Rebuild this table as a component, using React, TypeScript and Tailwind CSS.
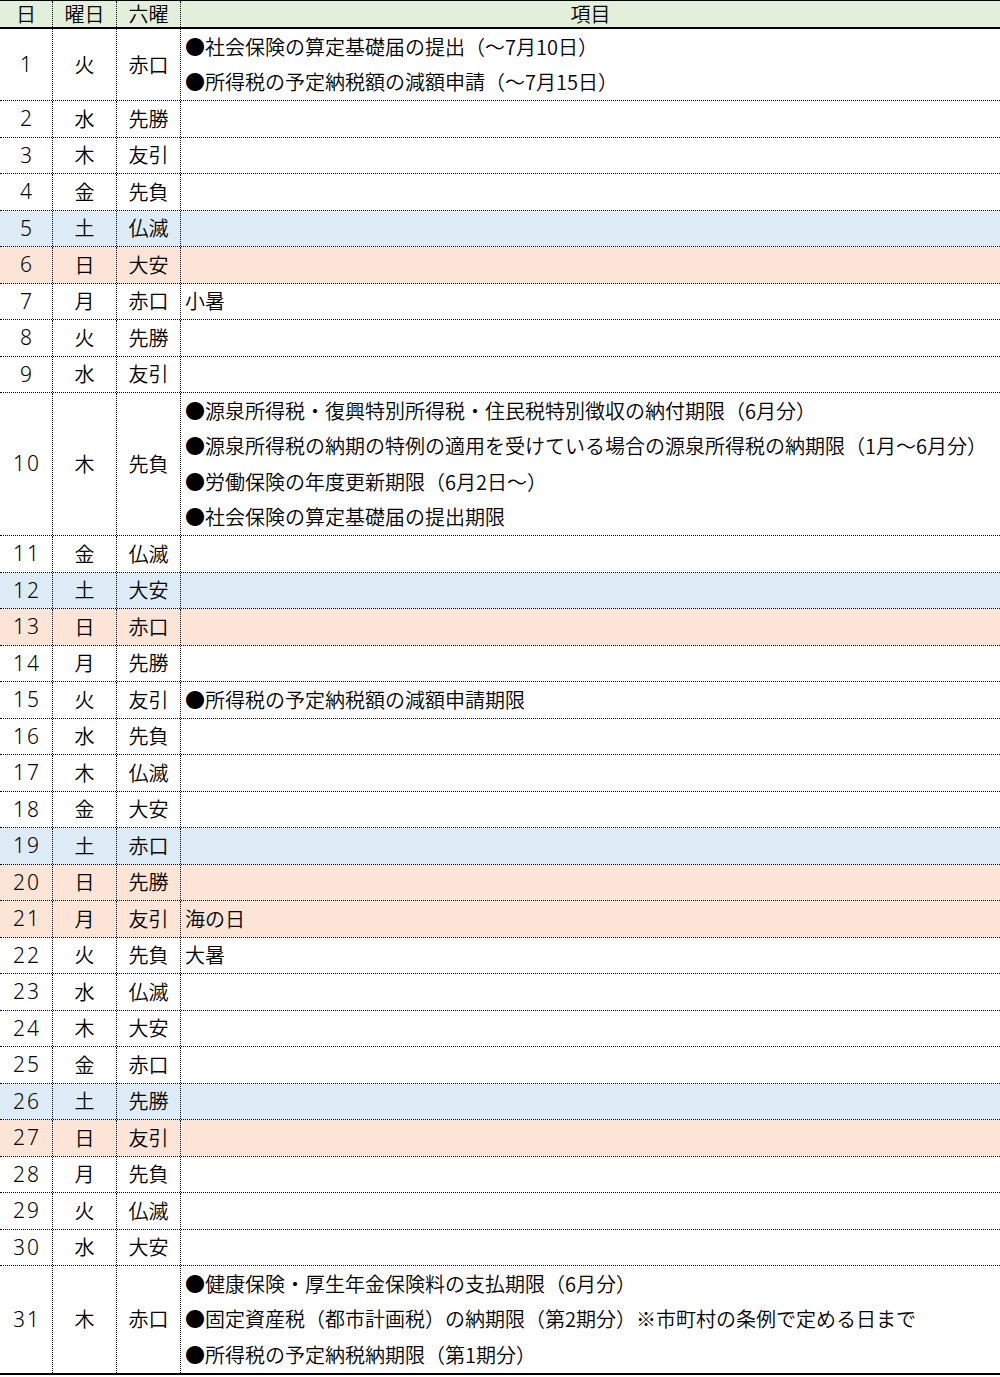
import React from 'react';

type Day = {
  day: number;
  wd: string;
  rokuyo: string;
  items: string[];
  tone?: 'sat' | 'sun';
};

const toneMap = {
  sat: 'bg-[#ddebf7]',
  sun: 'bg-[#fce4d6]',
};

const weekdays = ['火', '水', '木', '金', '土', '日', '月'];

const itemsByDay: Record<number, string[]> = {
  1: ['●社会保険の算定基礎届の提出（～7月10日）', '●所得税の予定納税額の減額申請（～7月15日）'],
  7: ['小暑'],
  10: [
    '●源泉所得税・復興特別所得税・住民税特別徴収の納付期限（6月分）',
    '●源泉所得税の納期の特例の適用を受けている場合の源泉所得税の納期限（1月～6月分）',
    '●労働保険の年度更新期限（6月2日～）',
    '●社会保険の算定基礎届の提出期限',
  ],
  15: ['●所得税の予定納税額の減額申請期限'],
  21: ['海の日'],
  22: ['大暑'],
  31: [
    '●健康保険・厚生年金保険料の支払期限（6月分）',
    '●固定資産税（都市計画税）の納期限（第2期分）※市町村の条例で定める日まで',
    '●所得税の予定納税納期限（第1期分）',
  ],
};

const rokuyoList = [
  '赤口', '先勝', '友引', '先負', '仏滅', '大安', '赤口', '先勝', '友引', '先負',
  '仏滅', '大安', '赤口', '先勝', '友引', '先負', '仏滅', '大安', '赤口', '先勝',
  '友引', '先負', '仏滅', '大安', '赤口', '先勝', '友引', '先負', '仏滅', '大安', '赤口',
];

const days: Day[] = Array.from({ length: 31 }, (_, i) => {
  const d = i + 1;
  const wd = weekdays[i % 7];
  let tone: Day['tone'];
  if (wd === '土') tone = 'sat';
  if (wd === '日' || d === 21) tone = 'sun'; // 海の日
  return { day: d, wd, rokuyo: rokuyoList[i], items: itemsByDay[d] ?? [], tone };
});

const cell = 'border-r border-dotted border-black flex items-center justify-center';

export default function App() {
  return (
    <div
      className="w-[1000px] bg-white text-black text-[20px] font-[350]"
      style={{ fontFamily: '"Noto Sans CJK JP", "Noto Sans", sans-serif' }}
    >
      <div className="grid grid-cols-[53px_64px_64px_1fr] h-[29px] bg-[#e2efda] border-t border-black border-b-2 border-b-black leading-none">
        <div className={cell}>日</div>
        <div className={cell}>曜日</div>
        <div className={cell}>六曜</div>
        <div className="flex items-center justify-center">項目</div>
      </div>

      <div className="border-b-2 border-black">
        {days.map((d) => (
          <div
            key={d.day}
            className={`grid grid-cols-[53px_64px_64px_1fr] border-b border-dotted border-black last:border-b-0 ${d.tone ? toneMap[d.tone] : ''}`}
          >
            <div className={`${cell} font-['Noto_Sans',sans-serif] font-light text-[21px] tracking-[2px] pl-[2px]`}>
              {d.day}
            </div>
            <div className={cell}>{d.wd}</div>
            <div className={cell}>{d.rokuyo}</div>
            <div className="flex flex-col pl-[4px]">
              {d.items.length === 0 ? (
                <div className="h-[35.5px]" />
              ) : (
                d.items.map((t, i) => (
                  <div key={i} className="h-[35.5px] flex items-center whitespace-nowrap">
                    {t}
                  </div>
                ))
              )}
            </div>
          </div>
        ))}
      </div>
    </div>
  );
}
